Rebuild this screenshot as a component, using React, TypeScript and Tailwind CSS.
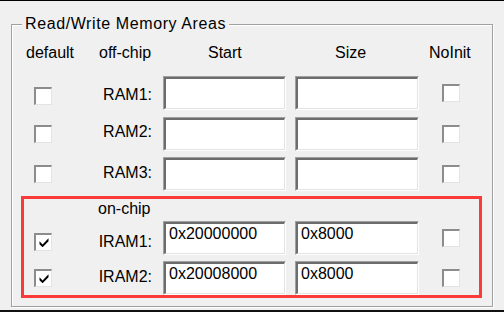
import React from "react";

const Check = ({ checked = false }: { checked?: boolean }) => (
  <div className="w-[18px] h-[18px] border-t-2 border-l-2 border-b border-r border-t-[#8c8c8c] border-l-[#8c8c8c] border-b-[#e3e3e3] border-r-[#e3e3e3] bg-white flex items-center justify-center">
    {checked && (
      <svg width="10" height="9" viewBox="0 0 7 7" className="block">
        <polygon points="0,2.6 2.4,5 7,0.2 7,2.6 2.4,7.2 0,4.8" fill="#000" />
      </svg>
    )}
  </div>
);

const Field = ({ value = "", w }: { value?: string; w: string }) => (
  <div className={`h-[34px] ${w} border border-t-[#a0a0a0] border-l-[#a0a0a0] border-b-white border-r-white`}>
    <div className="h-full border-t-2 border-l-2 border-b border-r border-t-[#6d6d6d] border-l-[#6d6d6d] border-b-[#e3e3e3] border-r-[#e3e3e3] bg-white pl-[3px] pt-[1px] leading-[18px] text-[16px] text-black whitespace-nowrap overflow-hidden">
      {value}
    </div>
  </div>
);

type RowProps = {
  rowMt: string;
  cbMl: string;
  cbMt: string;
  labelMt: string;
  noMt: string;
  label: string;
  start?: string;
  size?: string;
  checked?: boolean;
};

const Row = ({ rowMt, cbMl, cbMt, labelMt, noMt, label, start, size, checked }: RowProps) => (
  <div className={`flex items-start h-[34px] ${rowMt}`}>
    <div className={`${cbMl} ${cbMt}`}>
      <Check checked={checked} />
    </div>
    <div className={`w-[100px] text-right leading-[18px] ${labelMt}`}>{label}</div>
    <div className="ml-[11px]">
      <Field w="w-[123px]" value={start} />
    </div>
    <div className="ml-[9px]">
      <Field w="w-[124px]" value={size} />
    </div>
    <div className={`ml-[23px] ${noMt}`}>
      <Check />
    </div>
  </div>
);

export default function App() {
  return (
    <div className="w-[504px] h-[312px] bg-[#f0f0f0] border-t border-b-2 border-t-black border-b-[#111] overflow-hidden text-[16px] text-black font-['Liberation_Sans',Arial,sans-serif]">
      <div className="relative ml-[11px] mt-[23px] w-[482px] h-[283px] border border-[#a0a0a0] shadow-[inset_1px_1px_0_#ffffff,1px_1px_0_#ffffff]">
        <span className="absolute left-[10px] top-[-10px] px-[3px] bg-[#f0f0f0] leading-[18px] whitespace-nowrap tracking-[0.6px]">
          Read/Write Memory Areas
        </span>

        <div className="grid grid-cols-[73px_109px_127px_94px_auto] pl-[14px] mt-[19px] leading-[18px] whitespace-nowrap">
          <span>default</span>
          <span>off-chip</span>
          <span>Start</span>
          <span>Size</span>
          <span>NoInit</span>
        </div>

        <Row rowMt="mt-[14px]" cbMl="ml-[22px]" cbMt="mt-[11px]" labelMt="mt-[10px]" noMt="mt-[8px]" label="RAM1:" />
        <Row rowMt="mt-[7px]" cbMl="ml-[22px]" cbMt="mt-[8px]" labelMt="mt-[6px]" noMt="mt-[8px]" label="RAM2:" />
        <Row rowMt="mt-[6px]" cbMl="ml-[22px]" cbMt="mt-[8px]" labelMt="mt-[7px]" noMt="mt-[8px]" label="RAM3:" />

        <div className="ml-[9px] mt-[5px] w-[461px] border-[3px] border-[#fb3a3a]">
          <div className="ml-[74px] mt-[1px] leading-[18px]">on-chip</div>
          <Row
            rowMt="mt-[3px]"
            cbMl="ml-[10px]"
            cbMt="mt-[12px]"
            labelMt="mt-[12px]"
            noMt="mt-[8px]"
            label="IRAM1:"
            start="0x20000000"
            size="0x8000"
            checked
          />
          <Row
            rowMt="mt-[6px]"
            cbMl="ml-[10px]"
            cbMt="mt-[8px]"
            labelMt="mt-[7px]"
            noMt="mt-[8px]"
            label="IRAM2:"
            start="0x20008000"
            size="0x8000"
            checked
          />
        </div>
      </div>
    </div>
  );
}
